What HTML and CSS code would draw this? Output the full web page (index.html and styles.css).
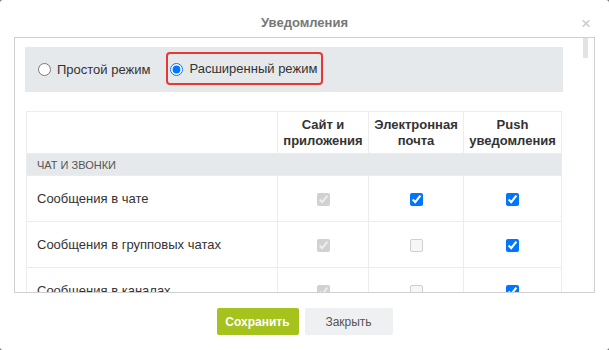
FILE: index.html
```html
<!DOCTYPE html>
<html lang="ru">
<head>
    <meta charset="UTF-8" />
    <meta name="viewport" content="width=device-width, initial-scale=1" />
    <title>Уведомления</title>
    <link rel="stylesheet" href="styles.css">
</head>
<body>

    <div class="dialog">
        <div class="dialog-title">Уведомления</div>
        <span class="dialog-close">&times;</span>

        <div class="dialog-body">
            <span class="scroll-thumb"></span>

            <!-- Режим -->
            <div class="mode-bar">
                <label class="mode">
                    <input type="radio" name="mode" /> Простой режим
                </label>
                <label class="mode mode-active">
                    <input type="radio" name="mode" checked /> Расширенный режим
                </label>
            </div>

            <table class="notify-table">
                <colgroup>
                    <col class="col-name" />
                    <col class="col-site" />
                    <col class="col-mail" />
                    <col class="col-push" />
                </colgroup>
                <thead>
                    <tr>
                        <th></th>
                        <th>Сайт и приложения</th>
                        <th>Электронная почта</th>
                        <th>Push уведомления</th>
                    </tr>
                </thead>
                <tbody>
                    <tr class="section">
                        <td colspan="4">Чат и звонки</td>
                    </tr>
                    <tr>
                        <td>Сообщения в чате</td>
                        <td><input type="checkbox" checked disabled /></td>
                        <td><input type="checkbox" checked /></td>
                        <td><input type="checkbox" checked /></td>
                    </tr>
                    <tr>
                        <td>Сообщения в групповых чатах</td>
                        <td><input type="checkbox" checked disabled /></td>
                        <td><input type="checkbox" /></td>
                        <td><input type="checkbox" checked /></td>
                    </tr>
                    <tr>
                        <td>Сообщения в каналах</td>
                        <td><input type="checkbox" checked disabled /></td>
                        <td><input type="checkbox" /></td>
                        <td><input type="checkbox" checked /></td>
                    </tr>
                </tbody>
            </table>
        </div>

        <div class="dialog-buttons">
            <button class="btn btn-save">Сохранить</button>
            <button class="btn btn-close">Закрыть</button>
        </div>
    </div>

</body>
</html>
```

FILE: styles.css
```css
* {
    margin: 0;
    padding: 0;
    box-sizing: border-box;
}
body {
    font-family: 'Liberation Sans', Arial, sans-serif;
    background: #6f6f6f;
    color: #333;
    font-size: 13px;
}
.dialog {
    position: relative;
    width: 609px;
    height: 350px;
    background: #ffffff;
    border-radius: 3px;
}
.dialog-title {
    height: 37px;
    padding-top: 14px;
    line-height: 18px;
    text-align: center;
    font-size: 13px;
    font-weight: bold;
    color: #777;
}
.dialog-close {
    position: absolute;
    top: 15px;
    right: 18px;
    font-size: 17px;
    line-height: 17px;
    color: #c8c8c8;
}
.dialog-body {
    position: relative;
    height: 256px;
    margin: 0 14px 0 14px;
    padding: 9px 31px 0 10px;
    border: 1px solid #d0d0d0;
    overflow: hidden;
}
.scroll-thumb {
    position: absolute;
    top: 0;
    right: 6px;
    width: 5px;
    height: 20px;
    background: #e3e3e3;
}
/* Режим */
.mode-bar {
    display: flex;
    align-items: center;
    gap: 10px;
    height: 45px;
    padding-left: 11px;
    background: #e5e9ec;
}
.mode {
    display: flex;
    align-items: center;
    gap: 6px;
    height: 33px;
    padding: 0 4px 0 0;
    border: 2px solid transparent;
    border-radius: 4px;
    color: #333;
}
.mode input {
    width: 13px;
    height: 13px;
    margin: 0;
}
.mode-active {
    margin-bottom: 3px;
    padding-left: 2px;
    padding-right: 4px;
    border-color: #e53935;
}
.mode-active input {
    margin-top: 3px;
}
/* Таблица */
.notify-table {
    width: 535px;
    margin: 19px 0 0 1px;
    border-collapse: collapse;
    table-layout: fixed;
}
.col-name { width: 251px; }
.col-site { width: 91px; }
.col-mail { width: 95px; }
.col-push { width: 98px; }
.notify-table th,
.notify-table td {
    border: 1px solid #ececec;
}
.notify-table th {
    height: 42px;
    padding: 4px 2px;
    line-height: 16px;
    font-size: 13px;
    font-weight: bold;
    color: #333;
    text-align: center;
}
.notify-table td {
    height: 46px;
    text-align: center;
}
.notify-table td:first-child {
    padding: 0 0 0 10px;
    text-align: left;
    color: #333;
}
.notify-table .section td {
    height: 22px;
    padding: 0 0 0 10px;
    background: #e5e9ec;
    font-size: 11px;
    text-transform: uppercase;
    color: #555;
}
.notify-table input {
    width: 13px;
    height: 13px;
    margin: 0;
    vertical-align: middle;
}
.notify-table input:not(:checked) {
    appearance: none;
    border: 1px solid #cfcfcf;
    border-radius: 2px;
    background: #f7f7f7;
}
/* Кнопки */
.dialog-buttons {
    display: flex;
    justify-content: center;
    gap: 6px;
    padding-top: 15px;
}
.btn {
    height: 27px;
    border: none;
    border-radius: 2px;
    font-family: 'Liberation Sans', Arial, sans-serif;
    font-size: 12px;
}
.btn-save {
    width: 82px;
    background: #a5c21d;
    color: #fff;
    font-weight: bold;
}
.btn-close {
    width: 88px;
    background: #eef0f2;
    color: #555;
}
```
